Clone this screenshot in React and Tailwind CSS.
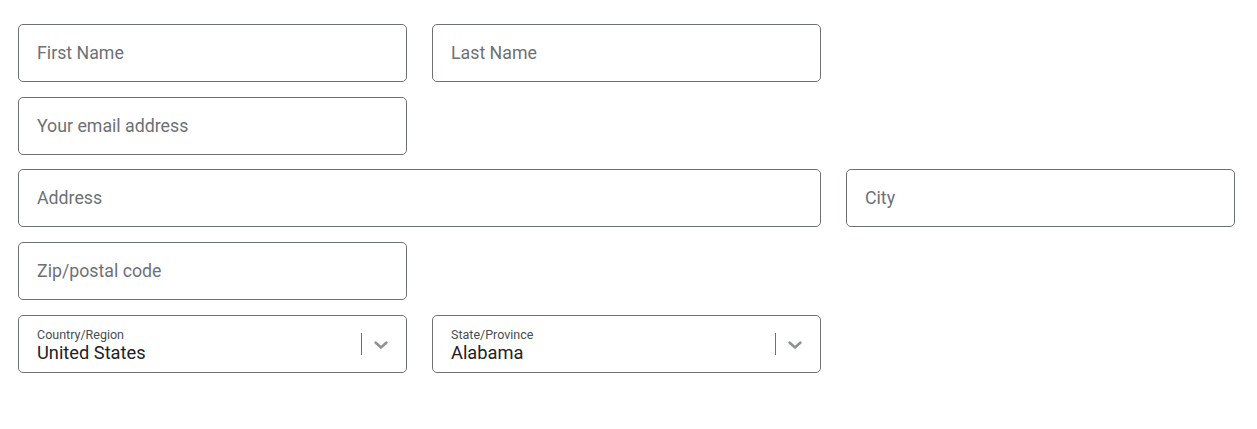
export default function App() {
  const font = { fontFamily: 'Roboto, "Noto Sans", sans-serif' };
  const Input = ({ ph, cls = "w-[389px]" }) => (
    <div className={`${cls} h-[58px] border border-[#6d7175] rounded-[5px] flex items-center pl-[18px] pt-[2px] bg-white`}>
      <span className="text-[17.75px] text-[#6d7175] leading-none">{ph}</span>
    </div>
  );
  const Select = ({ label, value }) => (
    <div className="w-[389px] h-[58px] border border-[#6d7175] rounded-[5px] flex items-center pl-[18px] bg-white">
      <div className="flex-1 flex flex-col pt-[4px]">
        <span className="text-[12.5px] leading-[14px] text-[#4a4d50]">{label}</span>
        <span className="text-[18.25px] leading-[22px] text-[#202223]">{value}</span>
      </div>
      <div className="w-px h-[22px] bg-[#6d7175] mr-[11px]" />
      <svg width="16" height="10" viewBox="0 0 16 10" className="mr-[17px] mt-[1px]">
        <path d="M2.5 2.5 L8 7.5 L13.5 2.5" fill="none" stroke="#8c9196" strokeWidth="2.4" strokeLinecap="round" strokeLinejoin="round" />
      </svg>
    </div>
  );
  return (
    <div className="w-[1257px] h-[429px] bg-white pl-[18px] pt-[24px]" style={font}>
      <div className="flex flex-col">
        <div className="flex gap-[25px]">
          <Input ph="First Name" />
          <Input ph="Last Name" />
        </div>
        <div className="flex mt-[15px]">
          <Input ph="Your email address" />
        </div>
        <div className="flex gap-[25px] mt-[14px]">
          <Input ph="Address" cls="w-[803px]" />
          <Input ph="City" />
        </div>
        <div className="flex mt-[15px]">
          <Input ph="Zip/postal code" />
        </div>
        <div className="flex gap-[25px] mt-[15px]">
          <Select label="Country/Region" value="United States" />
          <Select label="State/Province" value="Alabama" />
        </div>
      </div>
    </div>
  );
}
